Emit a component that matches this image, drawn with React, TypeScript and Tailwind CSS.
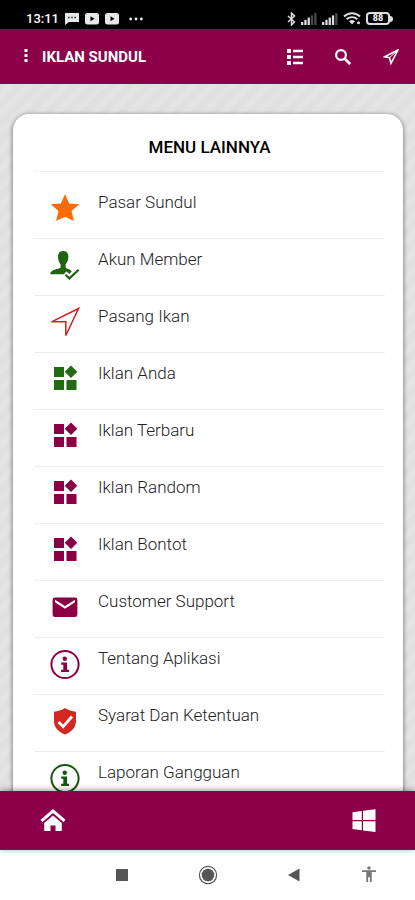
import React from 'react';

type IconProps = { className?: string };

const StarIcon = ({ className }: IconProps) => (
  <svg viewBox="0 0 32 32" className={className} fill="currentColor" aria-hidden="true">
    <path d="M16 2l4.100 9.400 10.200.9-7.800 6.800 2.400 10-8.900-4.400-8.900 4.400 2.400-10-7.800-6.800 10.200-.9z" />
  </svg>
);

const MemberIcon = ({ className }: IconProps) => (
  <svg viewBox="0 0 32 32" className={className} fill="currentColor" aria-hidden="true">
    <path d="M14.200 2C10.800 2 9 4.200 9 7.600c0 3.200.9 6 2.600 7.800v2.400c0 1-.6 1.500-2.400 1.900C5 20.600 1.500 21.600 1.200 25.200h13.600l2.600-2.800 3 2.600 2.300-2.400c-1-1.600-2.400-2.300-4.100-2.800-1.400-.4-2-.9-2-2v-2.400c1.800-1.800 2.800-4.600 2.800-7.800C19.400 4.200 17.600 2 14.200 2z" />
    <path d="M16.500 25.800l3.900 3.600 9.300-8.600" fill="none" stroke="currentColor" strokeWidth="2.200" />
  </svg>
);

const ArrowIcon = ({ className }: IconProps) => (
  <svg
    viewBox="0 0 32 32"
    className={className}
    fill="none"
    stroke="currentColor"
    strokeWidth="1.500"
    aria-hidden="true"
  >
    <path d="M29.500 2.500L2.500 15.800h14.300v13.700z" />
  </svg>
);

const WidgetsIcon = ({ className }: IconProps) => (
  <svg viewBox="0 0 32 32" className={className} fill="currentColor" aria-hidden="true">
    <path d="M5 4h10v10H5zM5 17h10v10H5zM17.500 17h10v10h-10zM22 2.500l6.300 6.300L22 15.100l-6.300-6.300z" />
  </svg>
);

const MailIcon = ({ className }: IconProps) => (
  <svg viewBox="0 0 32 32" className={className} fill="currentColor" aria-hidden="true">
    <path
      fillRule="evenodd"
      d="M6 6.500h20a2.400 2.400 0 0 1 2.400 2.400v14.800a2.400 2.400 0 0 1-2.400 2.400H6a2.400 2.400 0 0 1-2.400-2.400V8.900A2.400 2.400 0 0 1 6 6.500zm0 2.200v2.600l10 6.400 10-6.400V8.700l-10 6.200z"
    />
  </svg>
);

const InfoIcon = ({ className }: IconProps) => (
  <svg viewBox="0 0 32 32" className={className} fill="currentColor" aria-hidden="true">
    <circle cx="16" cy="16.500" r="13.600" fill="none" stroke="currentColor" strokeWidth="2" />
    <circle cx="15.800" cy="10.800" r="2.200" />
    <path d="M12.200 14.500h5.900v7.200h2v2.200h-8v-2.200h2.200v-5h-2.100z" />
  </svg>
);

const ShieldIcon = ({ className }: IconProps) => (
  <svg viewBox="0 0 32 32" className={className} fill="currentColor" aria-hidden="true">
    <path d="M16 3c3.300 2.100 7 3.300 11 3.700v9.300c0 6.200-4.400 11.200-11 13.500C9.400 27.200 5 22.200 5 16V6.700c4-.4 7.700-1.600 11-3.700z" />
    <path d="M9.500 17l4.600 4.600L23 11.500" fill="none" stroke="#fff" strokeWidth="2.800" />
  </svg>
);

const menuItems = [
  { label: 'Pasar Sundul', Icon: StarIcon, color: 'text-[#ff6b00]' },
  { label: 'Akun Member', Icon: MemberIcon, color: 'text-[#1f6410]' },
  { label: 'Pasang Ikan', Icon: ArrowIcon, color: 'text-[#d0211c]' },
  { label: 'Iklan Anda', Icon: WidgetsIcon, color: 'text-[#226b13]' },
  { label: 'Iklan Terbaru', Icon: WidgetsIcon, color: 'text-[#8b0045]' },
  { label: 'Iklan Random', Icon: WidgetsIcon, color: 'text-[#8b0045]' },
  { label: 'Iklan Bontot', Icon: WidgetsIcon, color: 'text-[#8b0045]' },
  { label: 'Customer Support', Icon: MailIcon, color: 'text-[#8b0045]' },
  { label: 'Tentang Aplikasi', Icon: InfoIcon, color: 'text-[#8b0045]' },
  { label: 'Syarat Dan Ketentuan', Icon: ShieldIcon, color: 'text-[#d32821]' },
  { label: 'Laporan Gangguan', Icon: InfoIcon, color: 'text-[#16560e]' },
];

function VideoBadge() {
  return (
    <svg viewBox="0 0 14 12" className="h-3 w-3.5" aria-hidden="true">
      <rect width="14" height="11.500" rx="2.500" fill="#e8e8e8" />
      <path d="M5.500 3.200v5l4-2.500z" fill="#000" />
    </svg>
  );
}

function Signal({ bars }: { bars: number }) {
  return (
    <svg viewBox="0 0 16 12" className="h-3 w-4" aria-hidden="true">
      {[0, 1, 2, 3, 4].map((i) => (
        <rect
          key={i}
          x={i * 3.3}
          y={9 - i * 2.2}
          width="2.300"
          height={3 + i * 2.2}
          fill={i < bars ? '#dcdcdc' : '#4a4a4a'}
        />
      ))}
    </svg>
  );
}

function StatusBar() {
  return (
    <div className="flex h-[29px] shrink-0 items-center justify-between bg-black pt-2 pr-[22px] pl-[26px] text-white">
      <div className="flex items-center gap-1.5">
        <span className="text-[13px] leading-4 font-medium">13:11</span>
        <svg viewBox="0 0 14 12" className="h-3 w-3.5" aria-hidden="true">
          <path d="M0 0h14v9H4l-4 3z" fill="#e8e8e8" />
          <path d="M3 4.500h1.600M6.200 4.500h1.600M9.400 4.500H11" stroke="#333" strokeWidth="1.400" />
        </svg>
        <VideoBadge />
        <VideoBadge />
        <svg viewBox="0 0 14 4" className="ml-1 h-1 w-3.5" fill="#eee" aria-hidden="true">
          <circle cx="1.600" cy="2" r="1.400" />
          <circle cx="7" cy="2" r="1.400" />
          <circle cx="12.400" cy="2" r="1.400" />
        </svg>
      </div>
      <div className="flex items-center gap-[5px]">
        <svg
          viewBox="0 0 9 14"
          className="h-3.5 w-[9px]"
          fill="none"
          stroke="#ddd"
          strokeWidth="1.500"
          aria-hidden="true"
        >
          <path d="M1 4l6.500 6L4.500 13V1l3 3L1 10" />
        </svg>
        <Signal bars={3} />
        <Signal bars={4} />
        <svg viewBox="0 0 18 13" className="h-[13px] w-[18px]" fill="none" stroke="#ddd" aria-hidden="true">
          <path d="M1 4.500c4.500-4.400 11.500-4.400 16 0M3.700 7.200c3-2.800 7.600-2.800 10.600 0" strokeWidth="1.900" />
          <path d="M6 9.200c1.700-1.500 4.300-1.500 6 0l-3 3.300z" fill="#ddd" stroke="none" />
          <circle cx="15.500" cy="10.800" r="1.500" fill="#ddd" stroke="none" />
        </svg>
        <div className="flex items-center">
          <span className="flex h-[13px] w-6 items-center justify-center rounded-[4px] border-2 border-[#ddd] text-[9px] leading-none font-bold">
            88
          </span>
          <span className="h-1.5 w-[3px] rounded-r-full bg-[#ddd]" />
        </div>
      </div>
    </div>
  );
}

function Header() {
  return (
    <header className="flex h-[55px] shrink-0 items-center bg-[#8b0048] pr-3 pl-5 text-white">
      <button aria-label="Menu" className="flex h-6 w-3 items-center justify-center">
        <svg viewBox="0 0 4 16" className="h-4 w-1" fill="currentColor" aria-hidden="true">
          <path d="M.5 0h3v3h-3zM.5 5h3v3h-3zM.5 10h3v3h-3z" />
        </svg>
      </button>
      <h1 className="ml-2.5 text-[15px] leading-6 font-bold">IKLAN SUNDUL</h1>
      <div className="ml-auto flex gap-6">
        <button aria-label="Daftar" className="flex size-6 items-center justify-center">
          <svg viewBox="0 0 16 16" className="size-4" fill="currentColor" aria-hidden="true">
            <path d="M0 0h4v4H0zM0 6h4v4H0zM0 12h4v4H0zM6 .7h10v2.600H6zM6 6.700h10v2.600H6zM6 12.700h10v2.600H6z" />
          </svg>
        </button>
        <button aria-label="Cari" className="flex size-6 items-center justify-center">
          <svg viewBox="0 0 16 16" className="size-4" fill="none" stroke="currentColor" aria-hidden="true">
            <circle cx="6" cy="6" r="4.900" strokeWidth="2.200" />
            <path d="M9.500 9.500l5.600 5.600" strokeWidth="2.700" />
          </svg>
        </button>
        <button aria-label="Kirim" className="flex size-6 items-center justify-center">
          <svg
            viewBox="0 0 16 16"
            className="size-4"
            fill="none"
            stroke="currentColor"
            strokeWidth="1.600"
            aria-hidden="true"
          >
            <path d="M15 1L1.500 7.800l5 .9 1.500 5.600z" />
            <path d="M15 1L6.500 8.700" strokeWidth="1" />
          </svg>
        </button>
      </div>
    </header>
  );
}

function MenuCard() {
  return (
    <section className="mr-3 ml-[13px] mt-[30px] rounded-t-2xl bg-white pr-[18px] pl-[21px] shadow-[0_1px_5px_rgba(0,0,0,0.55)]">
      <h2 className="border-b border-[#f0f0f0] pt-[21px] pb-3 text-center text-[17px] leading-6 font-medium text-black">
        MENU LAINNYA
      </h2>
      <ul className="pt-2.5">
        {menuItems.map(({ label, Icon, color }) => (
          <li key={label} className="border-b border-[#ececec]">
            <a href="#" className="flex h-14 items-start gap-[17px] px-[15px] pt-2">
              <Icon className={`mt-0.5 size-8 shrink-0 ${color}`} />
              <span className="text-[17px] leading-6 font-light text-[#222]">{label}</span>
            </a>
          </li>
        ))}
      </ul>
    </section>
  );
}

function BottomBar() {
  return (
    <nav className="z-10 flex h-[59px] shrink-0 items-center justify-between bg-[#8b0048] px-[39px] text-white shadow-[0_-1px_6px_rgba(0,0,0,0.4)]">
      <a href="#" aria-label="Beranda">
        <svg viewBox="0 0 28 28" className="size-7" fill="currentColor" aria-hidden="true">
          <path d="M14 8.500l8.800 7.400V24h-6.300v-5.500h-5V24H5.200v-8.100z" />
          <path d="M2.500 14L14 4l11.500 10" fill="none" stroke="currentColor" strokeWidth="3" />
          <path d="M3.800 15.600L14 6.800l10.200 8.800" fill="none" stroke="#8b0048" strokeWidth=".8" />
        </svg>
      </a>
      <a href="#" aria-label="Menu lainnya">
        <svg viewBox="0 0 24 24" className="size-6" fill="currentColor" aria-hidden="true">
          <path d="M.5 3.300l9.300-1.400v9H.5zM11 1.700L23.500.3v10.600H11zM.5 12.200h9.300v9L.5 20zM11 12.200h12.500v10.700L11 21.400z" />
        </svg>
      </a>
    </nav>
  );
}

function SystemNav() {
  return (
    <div className="grid h-[50px] shrink-0 grid-cols-[4fr_4fr_4fr_3fr] place-items-center bg-[#fefefe] pr-3.5 pl-[79px] text-[#555]">
      <button aria-label="Aplikasi terkini">
        <svg viewBox="0 0 20 20" className="size-5" fill="currentColor" aria-hidden="true">
          <path d="M4 4h12v12H4z" />
        </svg>
      </button>
      <button aria-label="Layar utama">
        <svg viewBox="0 0 20 20" className="size-5" fill="currentColor" aria-hidden="true">
          <circle cx="10" cy="10" r="8.600" fill="none" stroke="currentColor" strokeWidth="1.200" />
          <circle cx="10" cy="10" r="6.300" />
        </svg>
      </button>
      <button aria-label="Kembali">
        <svg viewBox="0 0 20 20" className="size-5" fill="currentColor" aria-hidden="true">
          <path d="M4 10l11.500-6.500v13z" />
        </svg>
      </button>
      <button aria-label="Aksesibilitas" className="text-[#777]">
        <svg viewBox="0 0 20 20" className="size-5" fill="currentColor" aria-hidden="true">
          <circle cx="10" cy="3" r="1.800" />
          <path d="M3 5.300h14v1.600h-4.300V17h-1.800v-4.700H9.100V17H7.300V6.900H3z" />
        </svg>
      </button>
    </div>
  );
}

export default function App() {
  return (
    <div className="flex h-screen flex-col font-[Roboto,sans-serif]">
      <StatusBar />
      <Header />
      <main className="min-h-0 flex-1 overflow-hidden bg-[#e2e2e2] bg-[repeating-linear-gradient(135deg,#e0e0e0_0px,#e0e0e0_4px,#e4e4e4_7px,#e4e4e4_10px,#e0e0e0_13px)]">
        <MenuCard />
      </main>
      <BottomBar />
      <SystemNav />
    </div>
  );
}
